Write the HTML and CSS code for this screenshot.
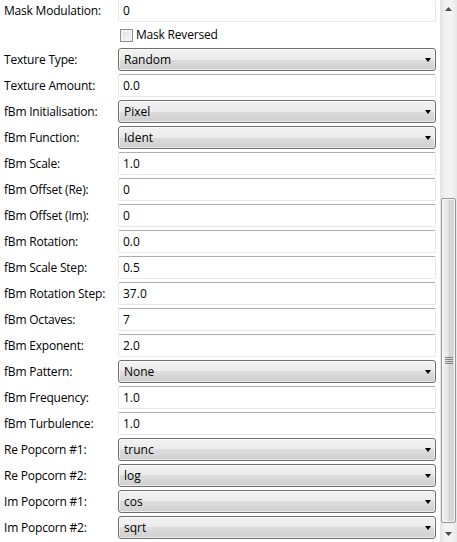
FILE: index.html
```html
<!doctype html>
<html lang="en">
<head>
<meta charset="utf-8">
<title>Properties</title>
<meta name="viewport" content="width=device-width, initial-scale=1">
<link rel="stylesheet" href="styles.css">
</head>
<body>

<div class="panel">
  <div class="props">
    <span class="name">Mask Modulation:</span><div class="edit">0</div>
    <span class="name"></span><label class="check"><span class="box"></span>Mask Reversed</label>

    <span class="name">Texture Type:</span><div class="combo">Random</div>
    <span class="name">Texture Amount:</span><div class="edit">0.0</div>
    <span class="name">fBm Initialisation:</span><div class="combo">Pixel</div>
    <span class="name">fBm Function:</span><div class="combo">Ident</div>
    <span class="name">fBm Scale:</span><div class="edit">1.0</div>
    <span class="name">fBm Offset (Re):</span><div class="edit">0</div>
    <span class="name">fBm Offset (Im):</span><div class="edit">0</div>
    <span class="name">fBm Rotation:</span><div class="edit">0.0</div>
    <span class="name">fBm Scale Step:</span><div class="edit">0.5</div>
    <span class="name">fBm Rotation Step:</span><div class="edit">37.0</div>
    <span class="name">fBm Octaves:</span><div class="edit">7</div>
    <span class="name">fBm Exponent:</span><div class="edit">2.0</div>
    <span class="name">fBm Pattern:</span><div class="combo">None</div>
    <span class="name">fBm Frequency:</span><div class="edit">1.0</div>
    <span class="name">fBm Turbulence:</span><div class="edit">1.0</div>
    <span class="name">Re Popcorn #1:</span><div class="combo">trunc</div>
    <span class="name">Re Popcorn #2:</span><div class="combo">log</div>
    <span class="name">Im Popcorn #1:</span><div class="combo">cos</div>
    <span class="name">Im Popcorn #2:</span><div class="combo">sqrt</div>
  </div>

  <!-- vertical scrollbar, classic aero look -->
  <div class="scrollbar">
    <div class="sb-btn"><svg width="7" height="4" viewBox="0 0 7 4"><path d="M0 4h7L3.5 0z" fill="#4d4d4d"/></svg></div>
    <div class="sb-track">
      <div class="sb-thumb">
        <svg width="8" height="7" viewBox="0 0 8 7"><path d="M0 .5h8M0 2.5h8M0 4.5h8M0 6.5h8" stroke="#7d7d7d"/></svg>
      </div>
    </div>
    <div class="sb-btn"><svg width="7" height="4" viewBox="0 0 7 4"><path d="M0 0h7L3.5 4z" fill="#4d4d4d"/></svg></div>
  </div>
</div>

</body>
</html>
```

FILE: styles.css
```css
:root{
  --c-text:#000;
  --c-edge:#e3e9ef;
  --c-edge-top:#abadb3;
  --c-combo-edge:#707070;
}
*{box-sizing:border-box;margin:0;padding:0;}
html,body{height:100%;}
body{background:#fff;color:var(--c-text);font:12px/1 "Open Sans","Noto Sans",sans-serif;overflow:hidden;}

.panel{display:flex;height:542px;}

.props{
  flex:1;
  display:grid;
  grid-template-columns:118px 318px;
  grid-template-rows:23px 20px;   /* checkbox row is a bit shorter */
  grid-auto-rows:23px;
  row-gap:3px;
  align-content:start;
  margin-top:-1px;
}

.name{display:flex;align-items:center;padding-left:4px;white-space:nowrap;letter-spacing:-.2px;}

.edit{
  display:flex;align-items:center;
  padding:0 4px;
  border:1px solid var(--c-edge);
  border-top-color:var(--c-edge-top);
  border-radius:2px;
  background:#fff;
}

.combo{
  position:relative;
  display:flex;align-items:center;
  padding:0 5px;
  border:1px solid var(--c-combo-edge);
  border-radius:3px;
  background:linear-gradient(#f2f2f2 0,#ebebeb 50%,#dddddd 50%,#cfcfcf 100%);
  box-shadow:inset 0 0 0 1px rgb(255 255 255 / .6);
}
.combo::after{                    /* drop-down arrow */
  content:"";
  position:absolute;
  right:4px;top:50%;
  margin-top:-2px;
  border-left:3.5px solid transparent;
  border-right:3.5px solid transparent;
  border-top:4px solid #000;
}

.check{display:flex;align-items:center;gap:3px;padding-left:2px;letter-spacing:-.2px;}
.box{
  width:13px;height:13px;
  border:1px solid #8e8f8f;
  background:linear-gradient(135deg,#dcdcdc,#fbfbfb);
  box-shadow:inset 0 0 0 2px #f4f4f4;
}

.scrollbar{
  width:17px;
  margin-left:4px;
  display:flex;flex-direction:column;
  background:linear-gradient(90deg,#e3e3e3,#f2f2f2 30%,#f2f2f2 70%,#e8e8e8);
}
.sb-btn{height:17px;display:flex;align-items:center;justify-content:center;}
.sb-track{flex:1;padding:181px 1px 2px;}
.sb-thumb{
  height:325px;
  display:flex;align-items:center;justify-content:center;
  border:1px solid #979797;
  border-radius:2px;
  background:linear-gradient(90deg,#f1f1f1,#e6e6e6 45%,#d4d4d4 55%,#dadada);
  box-shadow:inset 0 0 0 1px rgb(255 255 255 / .7);
}
```
